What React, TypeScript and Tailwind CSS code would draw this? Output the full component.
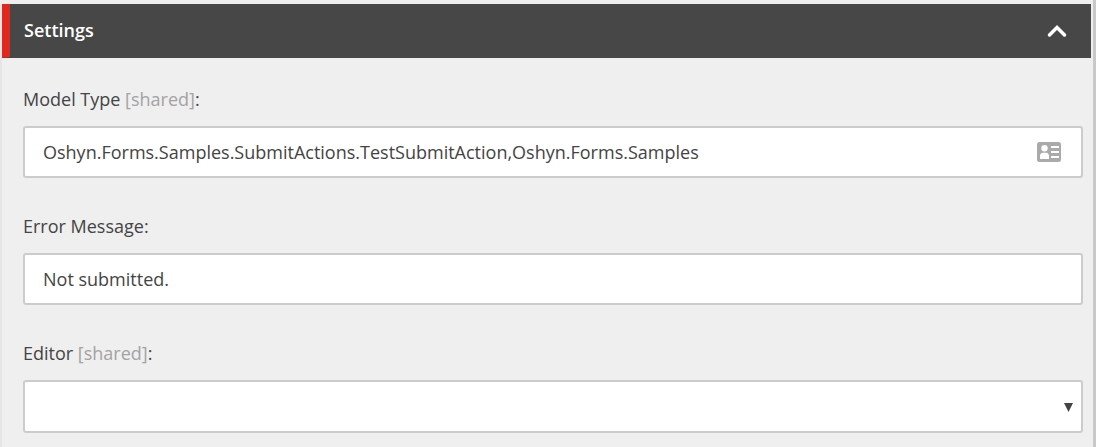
import React from "react";

function Label({ name, shared }: { name: string; shared?: boolean }) {
  return (
    <div className="h-[24px] text-[18px] leading-[24px] text-[#444444]">
      {name}
      {shared && <span className="text-[#a3a3a3]"> [shared]</span>}:
    </div>
  );
}

function CardIcon() {
  return (
    <svg width="24" height="20" viewBox="0 0 24 20" className="block">
      <path
        fillRule="evenodd"
        fill="#aaaaaa"
        d="M2.500 0h19A2.500 2.500 0 0 1 24 2.500v15a2.500 2.500 0 0 1-2.500 2.500h-19A2.500 2.500 0 0 1 0 17.500v-15A2.500 2.500 0 0 1 2.500 0ZM7.500 3a3.200 3.200 0 1 0 0 6.400a3.200 3.200 0 0 0 0-6.400ZM3 17h9v-3.200c0-1.500-1.200-3-2.500-3h-4C4.200 10.800 3 12.300 3 13.800ZM14 4v2h8V4ZM14 9v2h8V9ZM14 14v2h8v-2Z"
      />
    </svg>
  );
}

export default function App() {
  return (
    <div
      className="h-[447px] w-[1096px] overflow-hidden bg-[#efefef] pt-[4px] flex"
      style={{ fontFamily: '"Open Sans", sans-serif' }}
    >
      <div className="w-[1093px] h-full border-l-2 border-[#e6e6e6] flex-none">
        <div className="relative h-[54px] w-[1089px] bg-[#474747] pl-[22px] pr-[24px] flex items-center justify-between">
          <div
            className="absolute left-0 top-0 h-[54px] w-[8px] bg-[#e1281c]"
            style={{ clipPath: "polygon(0 0, 100% 0, 100% 98%, 0 100%)" }}
          />
          <span className="text-[18px] font-semibold text-white leading-[24px] -mt-[2px]">Settings</span>
          <svg width="20" height="14" viewBox="0 0 20 14" className="block">
            <path d="M2.500 11L10 3.500L17.500 11" fill="none" stroke="#ffffff" strokeWidth="3.500" strokeLinecap="round" />
          </svg>
        </div>
        <div className="pl-[21px] pt-[29px] w-[1081px]">
          <Label name="Model Type" shared />
          <div className="mt-[15px] h-[52px] border-2 border-[#cccccc] rounded-[3px] bg-white pl-[18px] pr-[20px] flex items-center justify-between text-[18px] text-[#444444]">
            <span>Oshyn.Forms.Samples.SubmitActions.TestSubmitAction,Oshyn.Forms.Samples</span>
            <CardIcon />
          </div>
          <div className="mt-[36px]">
            <Label name="Error Message" />
          </div>
          <div className="mt-[15px] h-[52px] border-2 border-[#cccccc] rounded-[3px] bg-white pl-[18px] flex items-center text-[18px] text-[#444444]">
            Not submitted.
          </div>
          <div className="mt-[36px]">
            <Label name="Editor" shared />
          </div>
          <div className="mt-[15px] h-[53px] border-2 border-[#cccccc] rounded-[3px] bg-white pr-[8px] flex items-center justify-end">
            <svg width="9" height="9" viewBox="0 0 9 9" className="block mt-[2px]">
              <path d="M0 0H9L4.500 9Z" fill="#444444" />
            </svg>
          </div>
        </div>
      </div>
      <div className="w-[3px] h-[447px] -mt-[4px] flex-none bg-[#c8c8c8]" />
    </div>
  );
}
